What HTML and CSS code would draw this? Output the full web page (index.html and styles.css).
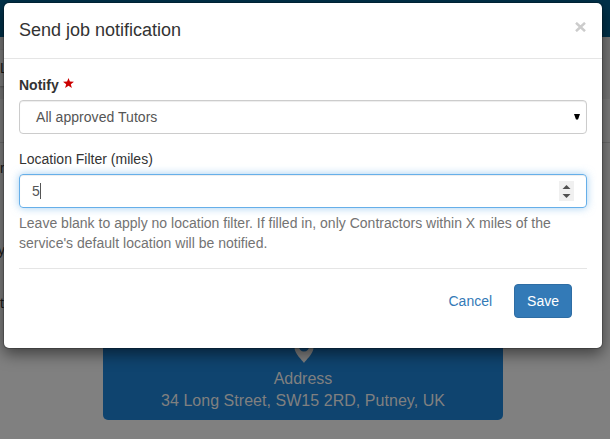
FILE: index.html
```html
<!DOCTYPE html>
<html lang="en">
<head>
<meta charset="utf-8">
<title>Send job notification</title>
<link rel="stylesheet" href="styles.css">
</head>
<body>
<div class="page">
  <div class="navbar"></div>
  <div class="subbar"><div class="crumb">L</div></div>
  <div class="details">
    <div class="row row-first"></div>
    <div class="row row-r">r</div>
    <div class="row row-y">y</div>
    <div class="row row-t">t</div>
    <div class="address">
      <svg class="pin" width="20" height="27" viewBox="0 0 20 27"><path fill-rule="evenodd" d="M10 27C8.500 24.500 .5 17.500 .5 12V9.500a9.500 9.500 0 0 1 19 0V12C19.500 17.500 11.500 24.500 10 27ZM10 5a5 5 0 1 0 0 10.500A5 5 0 0 0 10 5Z"/></svg>
      <div>Address</div>
      <div class="street">34 Long Street, SW15 2RD, Putney, UK</div>
    </div>
  </div>
</div>
<div class="modal" role="dialog">
  <div class="modal-header">
    <h4>Send job notification</h4>
    <svg class="close" width="11" height="10" viewBox="0 0 11 10"><path d="M1 .8 10 9.200M10 .8 1 9.200"/></svg>
  </div>
  <div class="modal-body">
    <div class="label label-bold">Notify
      <svg class="star" width="11" height="10" viewBox="0 0 11 10"><path d="M5.500 0 6.900 3.600 11 3.800 7.800 6.200 8.900 10 5.500 7.800 2.100 10 3.200 6.200 0 3.800 4.100 3.600Z"/></svg>
    </div>
    <div class="control select"><span>All approved Tutors</span>
      <svg class="arrow" width="6" height="6" viewBox="0 0 6 6"><path d="M0 0H6L4 5.500H2Z"/></svg>
    </div>
    <div class="label">Location Filter (miles)</div>
    <div class="control number"><span>5</span><i class="caret"></i>
      <svg class="spinner" width="15" height="20" viewBox="0 0 15 20"><path class="spin-bg" d="M0 0H15V20H0Z"/><path d="M3.500 8 7.500 4 11.500 8ZM3.500 13H11.500L7.500 17Z"/></svg>
    </div>
    <p class="help">Leave blank to apply no location filter. If filled in, only Contractors within X miles of the service's default location will be notified.</p>
    <div class="actions">
      <span class="btn">Cancel</span>
      <span class="btn btn-primary">Save</span>
    </div>
  </div>
</div>
</body>
</html>
```
FILE: styles.css
```css
* { box-sizing: border-box; }
body {
  margin: 0;
  width: 610px;
  height: 439px;
  overflow: hidden;
  position: relative;
  font: 14px/20px "Liberation Sans", Arial, sans-serif;
  color: #333;
  background: #808080;
}
.page { color: #1a1a1a; }
.navbar { height: 37px; background: #00324b; }
.subbar { height: 62px; padding-top: 13px; background: #797979; }
.crumb { height: 36px; padding-top: 8px; background: #808080; box-shadow: 0 1px 2px rgba(0,0,0,.3); width: 100px; }
.details { display: flex; flex-direction: column; }
.row-first { height: 44px; border-bottom: 1px solid #6f6f6f; }
.row-r { height: 77px; padding-top: 15px; }
.row-y { height: 58px; padding-top: 20px; margin-left: -2px; }
.row-t { height: 57px; padding-top: 15px; }
.address {
  align-self: center;
  width: 400px;
  height: 85px;
  margin-right: 4px;
  background: #0f446f;
  border-radius: 0 0 5px 5px;
  font-size: 16px;
  line-height: 22px;
  text-align: center;
  color: #808080;
}
.street { letter-spacing: .04px; }
.pin { display: block; margin: 1px auto 5px; fill: #808080; position: relative; left: 1px; }
.modal {
  position: absolute;
  left: 3px;
  top: 2px;
  width: 600px;
  height: 347px;
  background: #fff;
  background-clip: padding-box;
  border: 1px solid rgba(0,0,0,.2);
  border-radius: 6px;
  box-shadow: 0 5px 15px rgba(0,0,0,.5);
}
.modal-header {
  display: flex;
  justify-content: space-between;
  height: 56px;
  padding: 14px 16px 0 15px;
  border-bottom: 1px solid #e5e5e5;
}
h4 { margin: 0; font-size: 18px; line-height: 26px; font-weight: 500; }
.close { margin-top: 5px; stroke: #ccc; stroke-width: 2.5; }
.modal-body { padding: 16px 15px 0; }
.label { height: 20px; margin-bottom: 5px; }
.label-bold { font-weight: 700; }
.star { fill: #c00; vertical-align: 2px; }
.control {
  display: flex;
  align-items: center;
  height: 34px;
  border: 1px solid #ccc;
  border-radius: 4px;
  color: #555;
  box-shadow: inset 0 1px 1px rgba(0,0,0,.075);
}
.select { padding: 0 6px 0 16px; margin-bottom: 15px; letter-spacing: .04px; }
.arrow { margin-left: auto; fill: #000; }
.number {
  padding: 0 12px;
  border-color: #66afe9;
  box-shadow: inset 0 1px 1px rgba(0,0,0,.075), 0 0 8px rgba(102,175,233,.6);
}
.caret { width: 1px; height: 16px; background: #555; }
.spinner { margin-left: auto; fill: #505050; }
.spin-bg { fill: #f0f0f0; }
.help { margin: 5px 0 0; color: #737373; letter-spacing: .012px; }
.actions {
  display: flex;
  justify-content: flex-end;
  gap: 9px;
  margin-top: 15px;
  padding: 15px 15px 0;
  border-top: 1px solid #e5e5e5;
}
.btn { height: 34px; padding: 6px 12px; border: 1px solid transparent; border-radius: 4px; color: #337ab7; }
.btn-primary { background: #337ab7; border-color: #2e6da4; color: #fff; }
```
